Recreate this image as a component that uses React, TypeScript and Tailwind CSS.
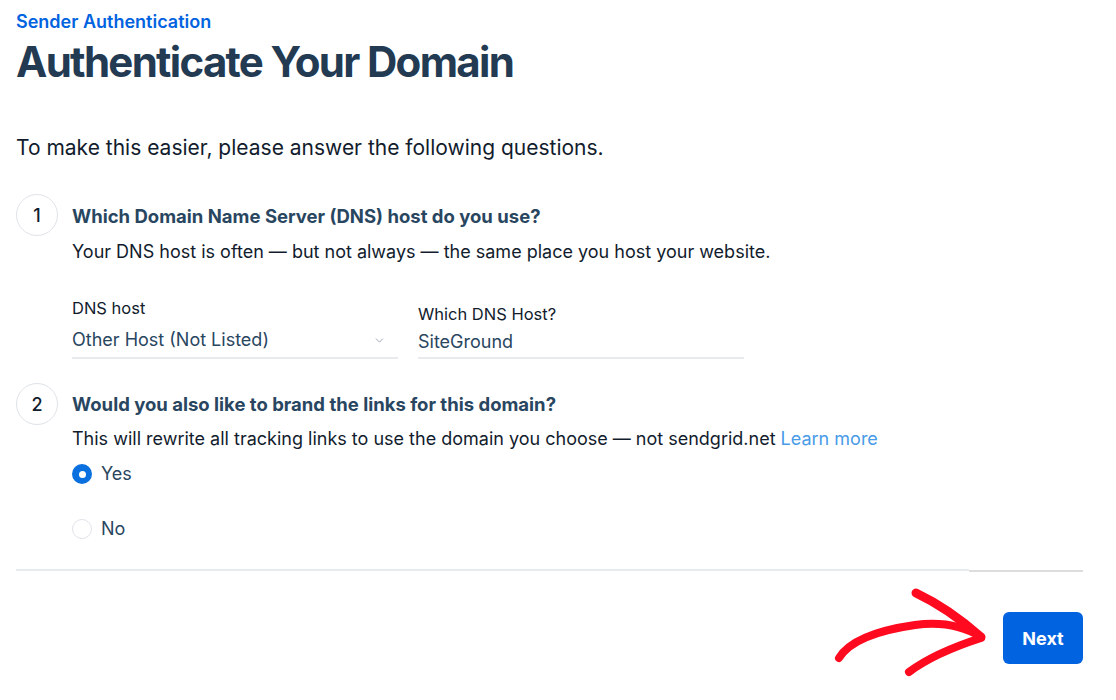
import { ChevronDown } from "lucide-react";

function StepBadge({ n }: { n: number }) {
  return (
    <div className="flex h-[42px] w-[42px] shrink-0 items-center justify-center rounded-full border border-[#dfe3e8] text-[18px] font-medium text-[#121c2d]">
      {n}
    </div>
  );
}

function Radio({ label, checked }: { label: string; checked?: boolean }) {
  return (
    <div className="flex h-[20px] items-center gap-[9px]">
      {checked ? (
        <span className="flex h-[20px] w-[20px] items-center justify-center rounded-full bg-[#0a6fdf]">
          <span className="h-[7px] w-[7px] rounded-full bg-white" />
        </span>
      ) : (
        <span className="h-[20px] w-[20px] rounded-full border border-[#e1e3ea] bg-white" />
      )}
      <span className="text-[18px] leading-[20px] text-[#294661]">{label}</span>
    </div>
  );
}

function HandArrow() {
  return (
    <svg className="pointer-events-none absolute left-[820px] top-[580px]" width="180" height="110" viewBox="820 580 180 110">
      <g fill="none" stroke="#ff0a1f" strokeLinecap="round" strokeLinejoin="round">
        <path d="M839 658 C 850 640, 880 630, 915 625 C 945 621, 965 627, 981 637" strokeWidth="8" />
        <path d="M916 593 C 935 602, 955 614, 981 637" strokeWidth="9" />
        <path d="M909 672 C 925 660, 950 648, 981 638" strokeWidth="8" />
      </g>
    </svg>
  );
}

export default function App() {
  return (
    <div className="relative h-[700px] w-[1116px] overflow-hidden bg-white pl-4 pr-[33px] font-['Inter',sans-serif]">
      <div className="pt-[13px] text-[18px] font-semibold leading-[18px] text-[#0263e0]">Sender Authentication</div>
      <h1 className="mt-[10px] text-[42px] font-bold leading-[42px] tracking-[-1.7px] text-[#233a53]">Authenticate Your Domain</h1>

      <p className="mt-[54px] text-[21px] leading-[21px] text-[#121c2d]">To make this easier, please answer the following questions.</p>

      <div className="mt-[36px] flex gap-[14px]">
        <StepBadge n={1} />
        <div className="pt-[12px]">
          <div className="text-[18.5px] font-bold leading-[20px] text-[#294661]">Which Domain Name Server (DNS) host do you use?</div>
          <div className="mt-[16px] text-[18px] leading-[20px] text-[#121c2d]">
            Your DNS host is often — but not always — the same place you host your website.
          </div>

          <div className="flex items-end gap-[20px]">
            <div className="mt-[36px] w-[326px]">
              <div className="text-[16.5px] leading-[20px] text-[#121c2d]">DNS host</div>
              <div className="mt-[10px] flex items-center justify-between border-b-2 border-[#e8eaee] pb-[5px]">
                <span className="text-[18px] leading-[24px] text-[#294661]">Other Host (Not Listed)</span>
                <ChevronDown className="mr-[12px] h-[13px] w-[13px] text-[#8a93a8]" strokeWidth={1.5} />
              </div>
            </div>
            <div className="w-[326px]">
              <div className="text-[16.5px] leading-[20px] text-[#121c2d]">Which DNS Host?</div>
              <div className="mt-[6px] border-b-2 border-[#e8eaee] pb-[3px] text-[18px] leading-[24px] text-[#294661]">SiteGround</div>
            </div>
          </div>
        </div>
      </div>

      <div className="mt-[24px] flex gap-[14px]">
        <StepBadge n={2} />
        <div className="pt-[11px]">
          <div className="text-[18.5px] font-bold leading-[20px] text-[#294661]">Would you also like to brand the links for this domain?</div>
          <div className="mt-[15px] text-[18px] leading-[20px] text-[#121c2d]">
            This will rewrite all tracking links to use the domain you choose — not sendgrid.net{" "}
            <a className="text-[#489be8]">Learn more</a>
          </div>
          <div className="mt-[15px]">
            <Radio label="Yes" checked />
          </div>
          <div className="mt-[35px]">
            <Radio label="No" />
          </div>
        </div>
      </div>

      <div className="mt-[30px] flex items-start">
        <div className="h-[2px] w-[953px] bg-[#e6ebf0]" />
        <div className="mt-[1px] h-[2px] flex-1 bg-[#dddddd]" />
      </div>

      <div className="mt-[40px] flex justify-end">
        <button className="h-[52px] w-[80px] rounded-[6px] bg-[#0263e0] text-[18px] font-bold text-white">Next</button>
      </div>

      <HandArrow />
    </div>
  );
}
